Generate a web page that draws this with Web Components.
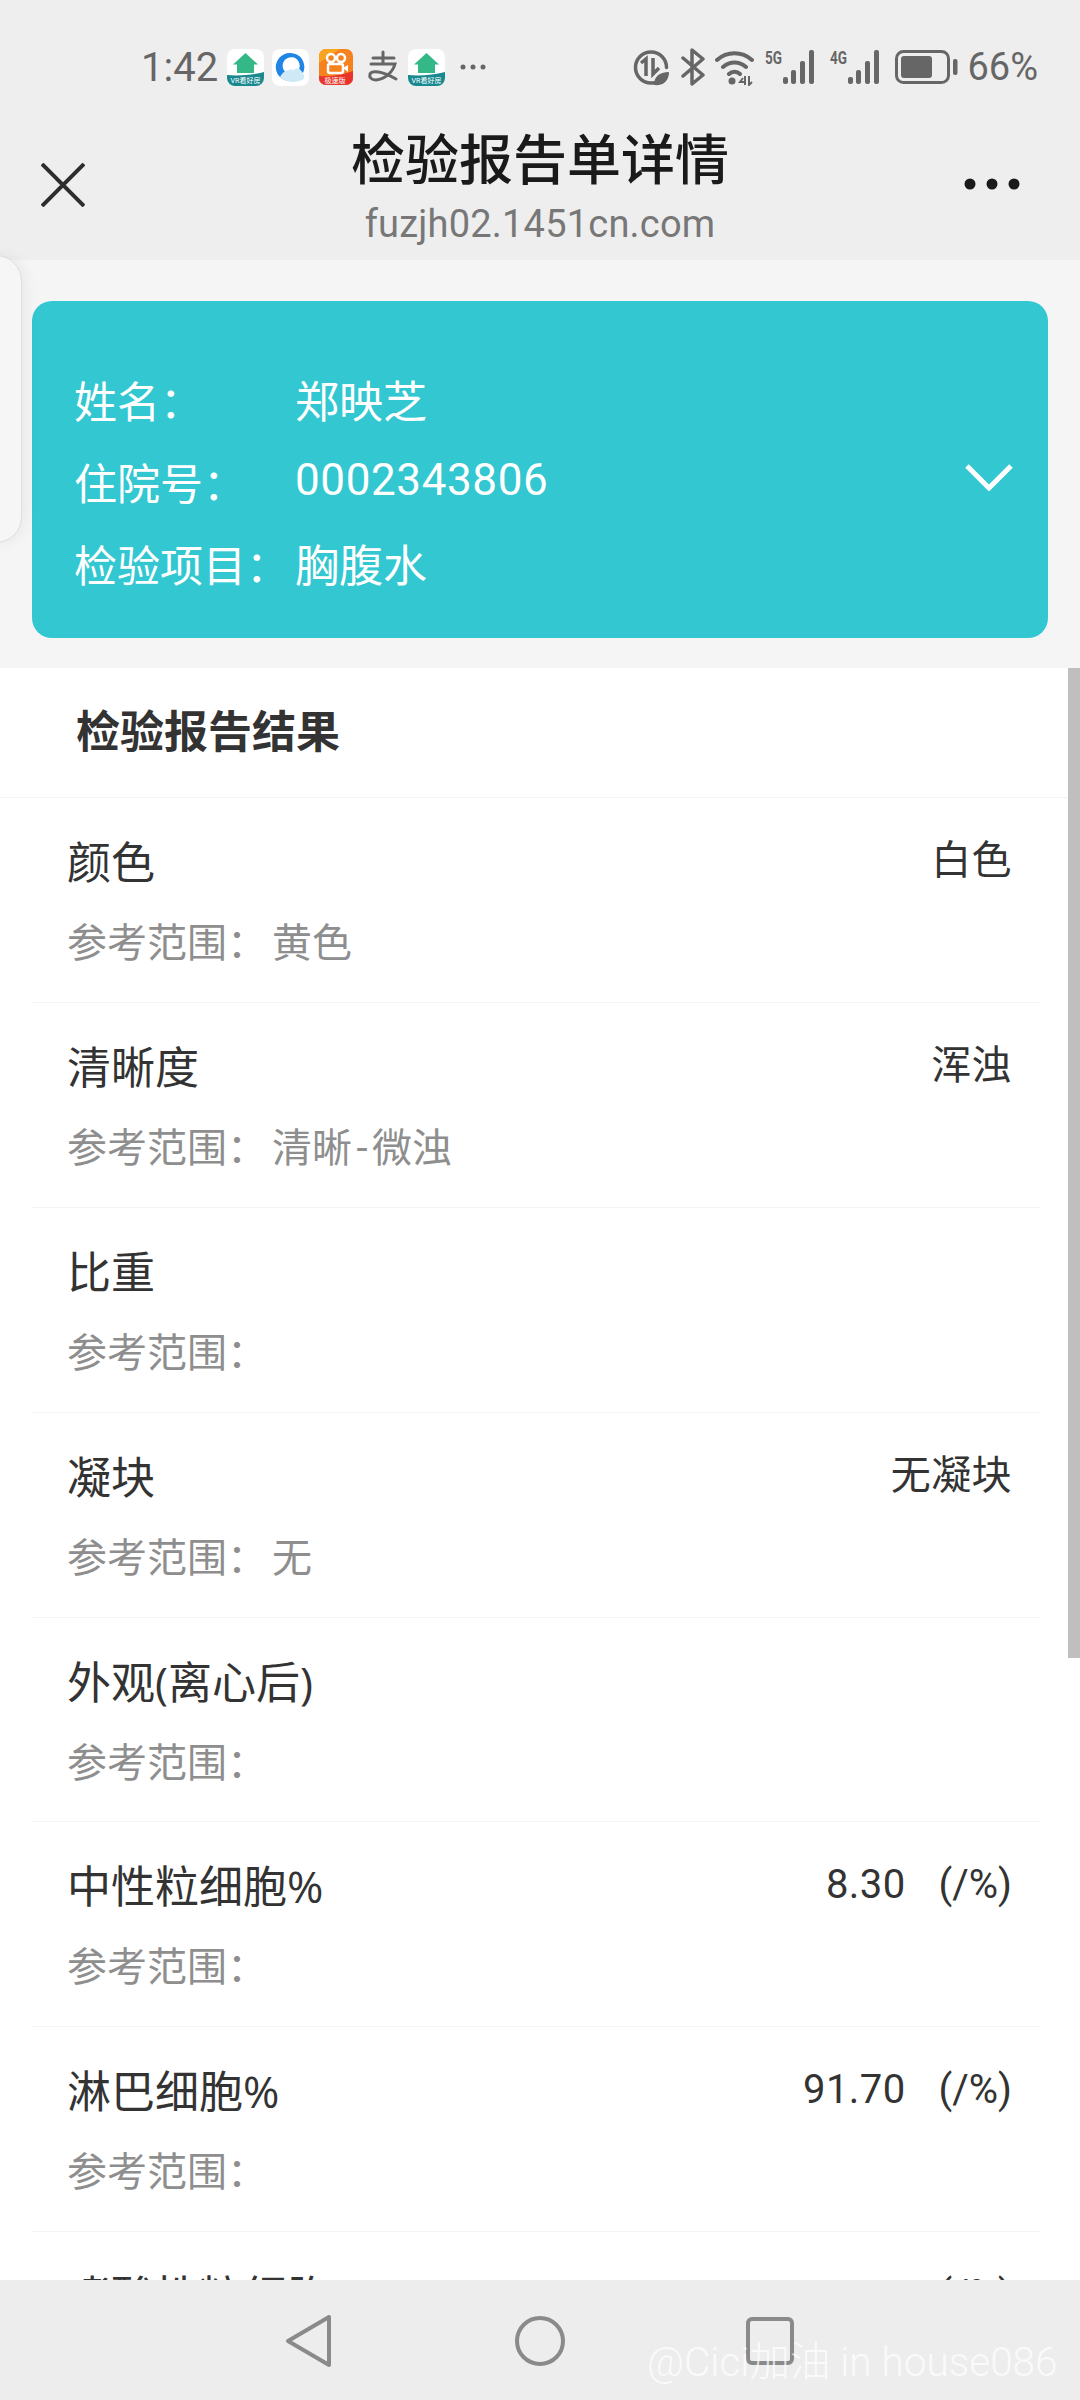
<!doctype html>
<html lang="zh">
<head>
<meta charset="utf-8">
<title>检验报告单详情</title>
<style>
  html, body { margin: 0; height: 2400px; overflow: hidden; }
  body {
    display: flex;
    flex-direction: column;
    position: relative;
    background: #fff;
    font-family: Roboto, "Noto Sans CJK SC", sans-serif;
  }
</style>
</head>
<body>
  <status-bar></status-bar>
  <nav-header heading="检验报告单详情" host-name="fuzjh02.1451cn.com"></nav-header>
  <patient-card>
    <patient-line label="姓名：">郑映芝</patient-line>
    <patient-line label="住院号：" toggle>0002343806</patient-line>
    <patient-line label="检验项目：">胸腹水</patient-line>
  </patient-card>
  <result-list heading="检验报告结果">
    <result-row name="颜色" range="黄色" value="白色"></result-row>
    <result-row name="清晰度" range="清晰-微浊" value="浑浊"></result-row>
    <result-row name="比重"></result-row>
    <result-row name="凝块" range="无" value="无凝块"></result-row>
    <result-row name="外观(离心后)"></result-row>
    <result-row name="中性粒细胞%" value="8.30" unit="(/%)"></result-row>
    <result-row name="淋巴细胞%" value="91.70" unit="(/%)"></result-row>
    <result-row name="嗜酸性粒细胞%" unit="(/%)"></result-row>
  </result-list>
  <bottom-nav></bottom-nav>
  <side-tab></side-tab>

<template id="status-bar-tpl">
  <style>
    :host {
      display: flex;
      align-items: center;
      height: 96px;
      padding: 38px 42px 0 141px;
      box-sizing: border-box;
      background: #eee;
      color: #666;
      flex: none;
    }
    .time { font-size: 40px; width: 86px; }
    .left { display: flex; align-items: center; }
    .right { margin-left: auto; display: flex; align-items: center; }
    svg { display: block; flex: none; }
    .pct { font-size: 38px; margin-left: 8px; color: #666; }
    text { font-family: Roboto, "Noto Sans CJK SC", sans-serif; }
    .sim { margin-top: -6px; }
  </style>
  <div class="left">
    <span class="time">1:42</span>
    <svg width="37" height="37" viewBox="0 0 37 37">
      <rect width="37" height="37" rx="8" fill="#fff"/>
      <path d="M0 26c12 1 26 0 37-3v6a8 8 0 0 1-8 8H8a8 8 0 0 1-8-8z" fill="#17898f"/>
      <path d="M18.500 4 31 15.500h-4V24H10v-8.500H6z" fill="#35b887"/>
      <text x="18.500" y="34" font-size="7" text-anchor="middle" fill="#fff">VR看好房</text>
    </svg>
    <svg width="37" height="37" viewBox="0 0 37 37" style="margin-left:8px">
      <rect width="37" height="37" rx="8" fill="#fff"/>
      <path d="M18 4a14 14 0 1 0 7 26l-4-5a8.500 8.500 0 1 1 6-5l4 4A14 14 0 0 0 18 4z" fill="#1f86e6"/>
      <path d="M8 28c3-6 9-9 14-7 3-3 7-1 8 3 3 1 3 6 0 7-6 3-16 3-22-3z" fill="#cfe9f6"/>
    </svg>
    <svg width="34" height="37" viewBox="0 0 34 37" style="margin-left:10px">
      <rect width="34" height="36" rx="7" fill="#f5811f"/>
      <path d="M0 8a7 7 0 0 1 7-8h14L0 14z" fill="#f9a321"/>
      <path d="M0 27c12 1 24-1 34-5v7a7 7 0 0 1-7 7H7a7 7 0 0 1-7-7z" fill="#e9342b"/>
      <circle cx="12" cy="9" r="4" fill="none" stroke="#fff" stroke-width="2.500"/>
      <circle cx="22" cy="9" r="4" fill="none" stroke="#fff" stroke-width="2.500"/>
      <rect x="9" y="15" width="15" height="9" rx="2" fill="none" stroke="#fff" stroke-width="2.500"/>
      <path d="m24 19 5-3v7z" fill="#fff"/>
      <text x="16" y="34" font-size="7" text-anchor="middle" fill="#fff">极速版</text>
    </svg>
    <svg width="34" height="34" viewBox="0 0 34 34" style="margin-left:13px" fill="none" stroke="#666" stroke-width="3" stroke-linecap="round">
      <path d="M7 8h21M17 2v12M5 14h24c-2 8-10 15-19 16-5 0-7-3-6-6 2-4 12-3 26 5"/>
    </svg>
    <svg width="37" height="37" viewBox="0 0 37 37" style="margin-left:8px">
      <rect width="37" height="37" rx="8" fill="#fff"/>
      <path d="M0 26c12 1 26 0 37-3v6a8 8 0 0 1-8 8H8a8 8 0 0 1-8-8z" fill="#17898f"/>
      <path d="M18.500 4 31 15.500h-4V24H10v-8.500H6z" fill="#35b887"/>
      <text x="18.500" y="34" font-size="7" text-anchor="middle" fill="#fff">VR看好房</text>
    </svg>
    <svg width="26" height="8" viewBox="0 0 26 8" fill="#666" style="margin-left:15px">
      <circle cx="3" cy="4" r="2.500"/><circle cx="13" cy="4" r="2.500"/><circle cx="23" cy="4" r="2.500"/>
    </svg>
  </div>
  <div class="right">
    <svg width="38" height="37" viewBox="0 0 38 37">
      <path d="M19 3a15.500 15.500 0 1 0 0 31c1 0 2 0 3-.3M19 3a15.500 15.500 0 0 1 15.500 15.500" fill="none" stroke="#666" stroke-width="3.500" stroke-linecap="round"/>
      <path d="M9 14l5-4v17M14 10v17" fill="none" stroke="#666" stroke-width="3.500"/>
      <path d="M21 9v16l6-6" fill="none" stroke="#666" stroke-width="3.500"/>
      <path d="M22 36c0-8 5-13 15-13 0 9-6 14-15 13z" fill="#666"/>
    </svg>
    <svg width="24" height="38" viewBox="0 0 24 38" style="margin-left:11px" fill="none" stroke="#666" stroke-width="3.500" stroke-linejoin="round" stroke-linecap="round">
      <path d="M2 10 22 27 11 36V2l11 9L2 28"/>
    </svg>
    <svg width="39" height="37" viewBox="0 0 39 37" style="margin-left:10px">
      <path d="M2 11c10-9 25-9 35 0M8 18c7-6 16-6 23 0M14 25c3-3 8-3 11 0" fill="none" stroke="#666" stroke-width="4" stroke-linecap="round"/>
      <circle cx="17" cy="32" r="3.500" fill="#666"/>
      <path d="M28 29l-3 4h5M30 27v9M34 27v9l3-3" fill="none" stroke="#666" stroke-width="2"/>
    </svg>
    <svg class="sim" width="52" height="40" viewBox="0 -6 52 40" fill="#666" style="margin-left:11px">
      <text x="0" y="14" font-size="18" font-weight="700" textLength="17" lengthAdjust="spacingAndGlyphs">5G</text>
      <rect x="18" y="27" width="5" height="7" rx="2"/><rect x="26" y="20" width="5" height="14" rx="2"/><rect x="35" y="11" width="5" height="23" rx="2"/><rect x="44" y="0" width="5" height="34" rx="2"/>
    </svg>
    <svg class="sim" width="52" height="40" viewBox="0 -6 52 40" fill="#666" style="margin-left:13px">
      <text x="0" y="14" font-size="18" font-weight="700" textLength="17" lengthAdjust="spacingAndGlyphs">4G</text>
      <rect x="18" y="27" width="5" height="7" rx="2"/><rect x="26" y="20" width="5" height="14" rx="2"/><rect x="35" y="11" width="5" height="23" rx="2"/><rect x="44" y="0" width="5" height="34" rx="2"/>
    </svg>
    <svg width="64" height="34" viewBox="0 0 64 34" style="margin-left:13px">
      <rect x="1.500" y="1.500" width="52" height="31" rx="7" fill="none" stroke="#666" stroke-width="3"/>
      <rect x="6" y="6" width="31" height="22" rx="3" fill="#666"/>
      <rect x="58" y="9" width="4.500" height="16" rx="2" fill="#666"/>
    </svg>
    <span class="pct">66%</span>
  </div>
</template>

<template id="nav-header-tpl">
  <style>
    :host {
      display: grid;
      grid-template-columns: 200px 1fr 200px;
      height: 164px;
      box-sizing: border-box;
      background: #eee;
      flex: none;
    }
    .close { padding: 67px 0 0 41px; }
    .more { padding: 82px 0 0 0; justify-self: end; margin-right: 60px; }
    svg { display: block; }
    .mid { text-align: center; padding-top: 34px; }
    h1 { margin: 0; font: 500 54px/64px Roboto, "Noto Sans CJK SC", sans-serif; color: #1a1a1a; }
    p { margin: 5px 0 0; font: 400 38px/50px Roboto, "Noto Sans CJK SC", sans-serif; letter-spacing: .2px; color: #777; }
  </style>
  <div class="close">
    <svg width="44" height="44" viewBox="0 0 44 44" fill="none" stroke="#2d2d2d" stroke-width="4">
      <path d="M1 1l42 42M43 1 1 43"/>
    </svg>
  </div>
  <div class="mid"><h1></h1><p></p></div>
  <div class="more">
    <svg width="56" height="12" viewBox="0 0 56 12" fill="#1a1a1a">
      <circle cx="6" cy="6" r="5.500"/><circle cx="28" cy="6" r="5.500"/><circle cx="50" cy="6" r="5.500"/>
    </svg>
  </div>
</template>

<template id="patient-card-tpl">
  <style>
    :host {
      display: block;
      background: #f5f5f5;
      padding: 41px 32px 30px;
      flex: none;
    }
    .card {
      height: 337px;
      box-sizing: border-box;
      padding: 61px 35px 0 42px;
      background: #32c7d1;
      border-radius: 20px;
      color: #fff;
      font: 400 43px/82px Roboto, "Noto Sans CJK SC", sans-serif;
    }
  </style>
  <div class="card"><slot></slot></div>
</template>

<template id="patient-line-tpl">
  <style>
    :host { display: flex; align-items: center; height: 82px; }
    .label { width: 221px; flex: none; }
    .val { flex: 1; font-size: 44px; }
    :host([toggle]) .val { letter-spacing: .6px; margin-bottom: 10px; }
    svg { display: none; margin-bottom: 16px; }
    :host([toggle]) svg { display: block; }
  </style>
  <span class="label"></span>
  <span class="val"><slot></slot></span>
  <svg width="48" height="28" viewBox="0 0 48 28" fill="none" stroke="#fff" stroke-width="5">
    <path d="M2 3l22 22L46 3"/>
  </svg>
</template>

<template id="result-list-tpl">
  <style>
    :host {
      display: block;
      flex: 1;
      min-height: 0;
      overflow: hidden;
      position: relative;
      background: #fff;
    }
    h2 {
      margin: 0;
      height: 130px;
      box-sizing: border-box;
      padding-left: 76px;
      border-bottom: 1px solid #f3f3f3;
      font: 700 44px/130px Roboto, "Noto Sans CJK SC", sans-serif;
      color: #333;
    }
    .thumb {
      position: absolute;
      top: 0;
      right: 0;
      width: 12px;
      height: 990px;
      background: #bfbfbf;
    }
  </style>
  <h2></h2>
  <slot></slot>
  <div class="thumb"></div>
</template>

<template id="result-row-tpl">
  <style>
    :host {
      display: block;
      height: 204.9px;
      box-sizing: border-box;
      margin: 0 40px 0 32px;
      padding: 0 28px 0 35px;
      border-bottom: 1px solid #f3f3f3;
      color: #333;
    }
    .top {
      display: flex;
      justify-content: space-between;
      padding-top: 35px;
      height: 75px;
      box-sizing: content-box;
    }
    .name { font: 400 44px/64px "Open Sans", "Noto Sans CJK SC", sans-serif; margin-top: -3px; }
    .value { font-size: 40px; line-height: 56px; white-space: nowrap; letter-spacing: .4px; }
    .unit { margin-left: 33px; letter-spacing: 0; }
    .unit:empty { margin-left: 0; }
    .range {
      margin-top: 8px;
      font-size: 40px;
      line-height: 56px;
      color: #8e8e8e;
      display: flex;
    }
    .range b { font-weight: 400; margin-left: 5px; }
    .dash { margin: 0 4.5px; }
  </style>
  <div class="top">
    <span class="name"></span>
    <span class="value"><span class="v"></span><span class="unit"></span></span>
  </div>
  <div class="range"><span>参考范围：</span><b></b></div>
</template>

<template id="bottom-nav-tpl">
  <style>
    :host {
      display: block;
      position: absolute;
      left: 0;
      right: 0;
      bottom: 0;
      height: 120px;
      background: #ededed;
    }
    .icons {
      display: flex;
      height: 100%;
      padding-top: 34px;
      box-sizing: border-box;
      padding-left: 285px;
    }
    svg { display: block; flex: none; }
    .mark {
      position: absolute;
      left: 647px;
      top: 60px;
      font: 300 40.500px/44px Roboto, "Noto Sans CJK SC", sans-serif;
      color: rgba(255, 255, 255, .75);
      white-space: nowrap;
    }
  </style>
  <div class="icons">
    <svg width="48" height="54" viewBox="0 0 48 54" fill="none" stroke="#8a8a8a" stroke-width="4" stroke-linejoin="round">
      <path d="M44 3v48L3 27z"/>
    </svg>
    <svg width="54" height="54" viewBox="0 0 54 54" fill="none" stroke="#8a8a8a" stroke-width="4" style="margin-left:180px">
      <circle cx="27" cy="27" r="23"/>
    </svg>
    <svg width="50" height="50" viewBox="0 0 50 50" fill="none" stroke="#8a8a8a" stroke-width="4" style="margin-left:178px;margin-top:2px">
      <rect x="3" y="3" width="44" height="44" rx="4"/>
    </svg>
  </div>
  <span class="mark">@Cici加油 in house086</span>
</template>

<template id="side-tab-tpl">
  <style>
    :host {
      display: block;
      position: absolute;
      left: -30px;
      top: 255px;
      width: 52px;
      height: 288px;
      box-sizing: border-box;
      background: #f6f6f6;
      border: 1px solid #ddd;
      border-radius: 30px;
      box-shadow: 4px 0 14px rgba(0, 0, 0, .05);
    }
  </style>
</template>

<script>
  function shadowFrom (el, id) {
    const shadow = el.attachShadow({mode: 'open'})
    shadow.append(document.getElementById(id).content.cloneNode(true))
    return shadow
  }

  class StatusBar extends HTMLElement {
    constructor () {
      super()
      shadowFrom(this, 'status-bar-tpl')
    }
  }

  class NavHeader extends HTMLElement {
    connectedCallback () {
      const shadow = this.shadowRoot || shadowFrom(this, 'nav-header-tpl')
      shadow.querySelector('h1').textContent = this.getAttribute('heading')
      shadow.querySelector('p').textContent = this.getAttribute('host-name')
    }
  }

  class PatientCard extends HTMLElement {
    constructor () {
      super()
      shadowFrom(this, 'patient-card-tpl')
    }
  }

  class PatientLine extends HTMLElement {
    connectedCallback () {
      const shadow = this.shadowRoot || shadowFrom(this, 'patient-line-tpl')
      shadow.querySelector('.label').textContent = this.getAttribute('label')
    }
  }

  class ResultList extends HTMLElement {
    connectedCallback () {
      const shadow = this.shadowRoot || shadowFrom(this, 'result-list-tpl')
      shadow.querySelector('h2').textContent = this.getAttribute('heading')
    }
  }

  class ResultRow extends HTMLElement {
    connectedCallback () {
      const shadow = this.shadowRoot || shadowFrom(this, 'result-row-tpl')
      shadow.querySelector('.name').textContent = this.getAttribute('name')
      shadow.querySelector('.v').textContent = this.getAttribute('value') || ''
      shadow.querySelector('.unit').textContent = this.getAttribute('unit') || ''

      // the hyphen in a range sits wider apart than the font sets it
      const range = shadow.querySelector('b')
      const [from, to] = (this.getAttribute('range') || '').split('-')
      range.textContent = from
      if (to) {
        const dash = document.createElement('span')
        dash.className = 'dash'
        dash.textContent = '-'
        range.append(dash, to)
      }
    }
  }

  class BottomNav extends HTMLElement {
    constructor () {
      super()
      shadowFrom(this, 'bottom-nav-tpl')
    }
  }

  class SideTab extends HTMLElement {
    constructor () {
      super()
      shadowFrom(this, 'side-tab-tpl')
    }
  }

  customElements.define('status-bar', StatusBar)
  customElements.define('nav-header', NavHeader)
  customElements.define('patient-card', PatientCard)
  customElements.define('patient-line', PatientLine)
  customElements.define('result-list', ResultList)
  customElements.define('result-row', ResultRow)
  customElements.define('bottom-nav', BottomNav)
  customElements.define('side-tab', SideTab)
</script>
</body>
</html>
